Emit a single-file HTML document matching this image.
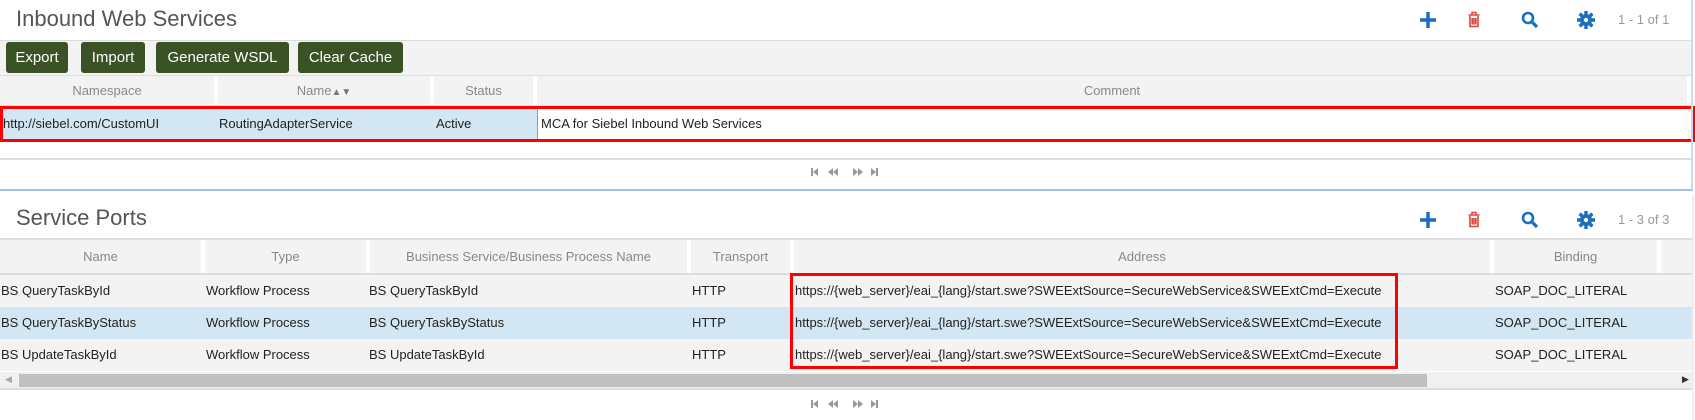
<!DOCTYPE html>
<html><head><meta charset="utf-8"><style>
*{margin:0;padding:0;box-sizing:border-box}
body{width:1695px;height:420px;background:#fff;font-family:"Liberation Sans",Arial,sans-serif;position:relative;overflow:hidden;color:#222}
.a{position:absolute;white-space:nowrap}
.t{font-size:22px;color:#555}
.btn{position:absolute;top:42px;height:31px;background:#3b5227;color:#fff;border-radius:3px;font-size:15px;line-height:31px;text-align:center}
.hd{position:absolute;background:#f3f3f3;color:#888;font-size:13px;text-align:center}
.cell{position:absolute;font-size:13px;line-height:32px}
.cnt{font-size:13px;color:#999}
</style></head><body>
<div class="a t" style="left:16px;top:6px">Inbound Web Services</div>
<div class="a" style="left:0;top:40px;width:1692px;height:36px;background:#f3f3f3;border-top:1px solid #ddd;border-bottom:1px solid #ddd"></div>
<div class="btn" style="left:6px;width:62px">Export</div>
<div class="btn" style="left:81px;width:64px">Import</div>
<div class="btn" style="left:156px;width:133px">Generate WSDL</div>
<div class="btn" style="left:298px;width:105px">Clear Cache</div>
<div class="hd" style="left:0;top:76px;width:214px;height:29px;line-height:29px">Namespace</div>
<div class="hd" style="left:218px;top:76px;width:212px;height:29px;line-height:29px">Name<span style="font-size:10px;color:#777">▲▼</span></div>
<div class="hd" style="left:434px;top:76px;width:99px;height:29px;line-height:29px">Status</div>
<div class="hd" style="left:537px;top:76px;width:1150px;height:29px;line-height:29px">Comment</div>
<div class="a" style="left:0;top:105px;width:1692px;height:2px;background:#ddd"></div>
<div class="a" style="left:0;top:107px;width:537px;height:34px;background:#d2e6f3"></div>
<div class="a" style="left:537px;top:107px;width:1px;height:34px;background:#999"></div>
<div class="cell" style="left:3px;top:108px">http://siebel.com/CustomUI</div>
<div class="cell" style="left:219px;top:108px">RoutingAdapterService</div>
<div class="cell" style="left:436px;top:108px">Active</div>
<div class="cell" style="left:541px;top:108px">MCA for Siebel Inbound Web Services</div>
<div class="a" style="left:0;top:106px;width:1695px;height:36px;border:3px solid #f00"></div>
<div class="a" style="left:0;top:158px;width:1692px;height:2px;background:#ddd"></div>
<svg class="a" style="left:811px;top:167px" width="70" height="10" viewBox="0 0 70 10" fill="#999">
<g id="pg"><rect x="0" y="1" width="2" height="8"/><path d="M7 1v8L2 5z"/>
<path d="M22 1v8L17 5zM27 1v8L22 5z"/>
<path d="M42 1v8L47 5zM47 1v8L52 5z"/>
<path d="M60 1v8L65 5z"/><rect x="65" y="1" width="2" height="8"/></g></svg>
<div class="a" style="left:0;top:189px;width:1693px;height:2px;background:#9cc3e3"></div>
<div class="a" style="left:1691px;top:0;width:2px;height:190px;background:#c8dcef"></div>
<svg class="a" style="left:1420px;top:10px" width="260" height="20" viewBox="0 0 260 20">
<g id="ic">
<path d="M8 2v16M0 10h16" stroke="#1a6fc0" stroke-width="3.5"/>
<g transform="translate(54,0)" fill="none" stroke="#d9463c" stroke-width="1.6"><path d="M-5.5 5h11M-2 5V2.5h4V5M-4 6v10.5h8V6M-1.8 8v6.5M0 8v6.5M1.8 8v6.5"/></g>
<g transform="translate(102,0)" fill="none" stroke="#1a6fc0"><circle cx="6" cy="8" r="5" stroke-width="2.6"/><path d="M10 12l5 5" stroke-width="3.2"/></g>
<g transform="translate(166,10)" fill="#1a6fc0"><circle r="6"/><path d="M-1.7-9h3.4v18h-3.4zM-9-1.7h18v3.4h-18z"/><path d="M-1.7-9h3.4v18h-3.4zM-9-1.7h18v3.4h-18z" transform="rotate(45)"/><circle r="2.2" fill="#fff"/></g>
</g></svg>
<div class="a cnt" style="left:1618px;top:12px">1 - 1 of 1</div>
<div class="a t" style="left:16px;top:205px">Service Ports</div>
<svg class="a" style="left:1420px;top:210px" width="260" height="20" viewBox="0 0 260 20"><use href="#ic"/></svg>
<div class="a cnt" style="left:1618px;top:212px">1 - 3 of 3</div>
<div class="a" style="left:0;top:238px;width:1692px;height:2px;background:#ddd"></div>
<div class="hd" style="left:0;top:240px;width:201px;height:33px;line-height:33px">Name</div>
<div class="hd" style="left:205px;top:240px;width:161px;height:33px;line-height:33px">Type</div>
<div class="hd" style="left:370px;top:240px;width:317px;height:33px;line-height:33px">Business Service/Business Process Name</div>
<div class="hd" style="left:691px;top:240px;width:99px;height:33px;line-height:33px">Transport</div>
<div class="hd" style="left:794px;top:240px;width:696px;height:33px;line-height:33px">Address</div>
<div class="hd" style="left:1494px;top:240px;width:163px;height:33px;line-height:33px">Binding</div>
<div class="hd" style="left:1661px;top:240px;width:31px;height:33px"></div>
<div class="a" style="left:0;top:273px;width:1692px;height:2px;background:#ddd"></div>
<div class="a" style="left:0;top:275px;width:1692px;height:32px;background:#f3f3f3"></div>
<div class="a" style="left:0;top:307px;width:1692px;height:32px;background:#d2e6f3"></div>
<div class="a" style="left:0;top:339px;width:1692px;height:32px;background:#f3f3f3"></div>
<div class="cell" style="left:1px;top:275px">BS QueryTaskById</div><div class="cell" style="left:206px;top:275px">Workflow Process</div><div class="cell" style="left:369px;top:275px">BS QueryTaskById</div><div class="cell" style="left:692px;top:275px">HTTP</div><div class="cell" style="left:795px;top:275px">https://{web_server}/eai_{lang}/start.swe?SWEExtSource=SecureWebService&amp;SWEExtCmd=Execute</div><div class="cell" style="left:1495px;top:275px">SOAP_DOC_LITERAL</div>
<div class="cell" style="left:1px;top:307px">BS QueryTaskByStatus</div><div class="cell" style="left:206px;top:307px">Workflow Process</div><div class="cell" style="left:369px;top:307px">BS QueryTaskByStatus</div><div class="cell" style="left:692px;top:307px">HTTP</div><div class="cell" style="left:795px;top:307px">https://{web_server}/eai_{lang}/start.swe?SWEExtSource=SecureWebService&amp;SWEExtCmd=Execute</div><div class="cell" style="left:1495px;top:307px">SOAP_DOC_LITERAL</div>
<div class="cell" style="left:1px;top:339px">BS UpdateTaskById</div><div class="cell" style="left:206px;top:339px">Workflow Process</div><div class="cell" style="left:369px;top:339px">BS UpdateTaskById</div><div class="cell" style="left:692px;top:339px">HTTP</div><div class="cell" style="left:795px;top:339px">https://{web_server}/eai_{lang}/start.swe?SWEExtSource=SecureWebService&amp;SWEExtCmd=Execute</div><div class="cell" style="left:1495px;top:339px">SOAP_DOC_LITERAL</div>
<div class="a" style="left:790px;top:273px;width:608px;height:96px;border:3px solid #f00"></div>
<div class="a" style="left:0;top:372px;width:1692px;height:16px;background:#f0f0f0"></div>
<div class="a" style="left:19px;top:374px;width:1408px;height:13px;background:#c0c0c0"></div>
<div class="a" style="left:5px;top:374px;font-size:9px;color:#aaa">◀</div>
<div class="a" style="left:1682px;top:374px;font-size:9px;color:#333">▶</div>
<div class="a" style="left:0;top:388px;width:1692px;height:2px;background:#ddd"></div>
<svg class="a" style="left:811px;top:399px" width="70" height="10" viewBox="0 0 70 10" fill="#999"><use href="#pg"/></svg>
<div class="a" style="left:1692px;top:195px;width:2px;height:225px;background:#eee"></div>
</body></html>
